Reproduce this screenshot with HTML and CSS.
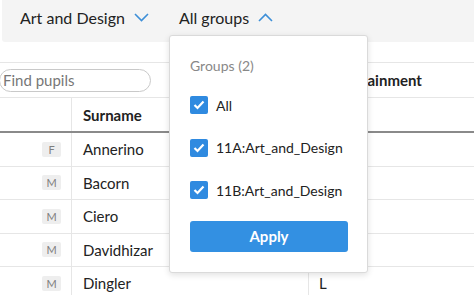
FILE: index.html
```html
<!DOCTYPE html>
<html lang="en">
<head>
    <meta charset="UTF-8" />
    <title>Pupils</title>
    <link rel="stylesheet" href="styles.css">
</head>
<body>

<div class="topbar">
    <div class="picker">
        <span>Art and Design</span>
        <svg class="chev" width="15" height="9" viewBox="0 0 15 9"><path d="M1 1 L7.5 7.5 L14 1" /></svg>
    </div>
    <div class="picker">
        <span>All groups</span>
        <svg class="chev" width="15" height="9" viewBox="0 0 15 9"><path d="M1 8 L7.5 1.5 L14 8" /></svg>
    </div>
</div>

<div class="grid">
    <div class="row toolbar">
        <div class="search-cell"><input class="search" type="text" placeholder="Find pupils" /></div>
        <div class="head-att">Attainment</div>
    </div>
    <div class="row header">
        <div class="c1"></div>
        <div class="c2">Surname</div>
        <div class="c3"></div>
    </div>
    <div class="row">
        <div class="c1"><span class="badge">F</span></div>
        <div class="c2">Annerino</div>
        <div class="c3"></div>
    </div>
    <div class="row">
        <div class="c1"><span class="badge">M</span></div>
        <div class="c2">Bacorn</div>
        <div class="c3"></div>
    </div>
    <div class="row">
        <div class="c1"><span class="badge">M</span></div>
        <div class="c2">Ciero</div>
        <div class="c3"></div>
    </div>
    <div class="row">
        <div class="c1"><span class="badge">M</span></div>
        <div class="c2">Davidhizar</div>
        <div class="c3"></div>
    </div>
    <div class="row">
        <div class="c1"><span class="badge">M</span></div>
        <div class="c2">Dingler</div>
        <div class="c3">L</div>
    </div>
</div>

<div class="popup">
    <div class="popup-title">Groups (2)</div>
    <label class="check"><span class="box"><svg width="12" height="10" viewBox="0 0 12 10"><path d="M1.5 5 L4.5 8 L10.5 1.5" /></svg></span>All</label>
    <label class="check"><span class="box"><svg width="12" height="10" viewBox="0 0 12 10"><path d="M1.5 5 L4.5 8 L10.5 1.5" /></svg></span>11A:Art_and_Design</label>
    <label class="check"><span class="box"><svg width="12" height="10" viewBox="0 0 12 10"><path d="M1.5 5 L4.5 8 L10.5 1.5" /></svg></span>11B:Art_and_Design</label>
    <button class="apply">Apply</button>
</div>

</body>
</html>
```

FILE: styles.css
```css
body {
    margin: 0;
    font-family: Lato, "Open Sans", sans-serif;
    color: #222;
    background: #fff;
    overflow: hidden;
}
.topbar {
    height: 42px;
    box-sizing: border-box;
    margin-left: 2px;
    background: #f4f4f4;
    border-radius: 0 0 0 3px;
    display: flex;
    align-items: center;
    padding: 0 0 8px 18px;
    gap: 30px;
    font-size: 16px;
}
.picker {
    display: flex;
    align-items: center;
    gap: 9px;
}
.chev path {
    fill: none;
    stroke: #3d8fd8;
    stroke-width: 1.6;
}
.grid {
    margin-top: 20px;
    border-top: 1px solid #e6e6e6;
}
.row {
    display: grid;
    grid-template-columns: 72px 237px 1fr;
    height: 32.5px;
    border-bottom: 1px solid #e6e6e6;
    font-size: 15px;
}
.row > div {
    display: flex;
    align-items: center;
}
.toolbar {
    height: 34px;
    grid-template-columns: 309px 1fr;
}
.header {
    height: 33px;
    border-bottom: 2px solid #8a8a8a;
}
.search {
    width: 152px;
    height: 23px;
    box-sizing: border-box;
    border: 1px solid #c9c9c9;
    border-radius: 12px;
    padding: 0 3px;
    margin-left: -1px;
    font-family: inherit;
    font-size: 15px;
    color: #333;
}
.search::placeholder {
    color: #777;
}
.head-att {
    font-weight: bold;
    font-size: 15px;
    padding-left: 38px;
}
.header .c2 {
    font-weight: bold;
}
.c1 {
    justify-content: flex-end;
    padding-right: 10px;
    border-right: 1px solid #e6e6e6;
}
.c2 {
    padding-left: 11px;
    border-right: 1px solid #e6e6e6;
}
.c3 {
    padding-left: 10px;
}
.badge {
    background: #eeeeee;
    color: #7e7e7e;
    font-size: 11px;
    border-radius: 2px;
    width: 19px;
    height: 15px;
    display: flex;
    align-items: center;
    justify-content: center;
}
.popup {
    position: absolute;
    left: 169px;
    top: 35px;
    width: 199px;
    height: 238px;
    box-sizing: border-box;
    background: #fff;
    border: 1px solid #dadada;
    border-radius: 3px;
    box-shadow: 0 2px 6px rgba(0, 0, 0, 0.12);
    padding: 21px 19px 0 20px;
}
.popup-title {
    color: #888;
    font-size: 14px;
    height: 20px;
    margin-bottom: 19px;
}
.check {
    display: flex;
    align-items: center;
    gap: 8px;
    font-size: 14px;
    height: 18px;
    margin-bottom: 24.5px;
}
.box {
    width: 18px;
    height: 18px;
    border-radius: 2px;
    background: #2f8ae0;
    display: flex;
    align-items: center;
    justify-content: center;
}
.box path {
    fill: none;
    stroke: #fff;
    stroke-width: 2.2;
}
.apply {
    display: block;
    width: 158px;
    height: 31px;
    margin-top: -3px;
    border: none;
    border-radius: 3px;
    background: #3390e2;
    color: #fff;
    font-family: inherit;
    font-size: 15px;
    font-weight: bold;
}
```
